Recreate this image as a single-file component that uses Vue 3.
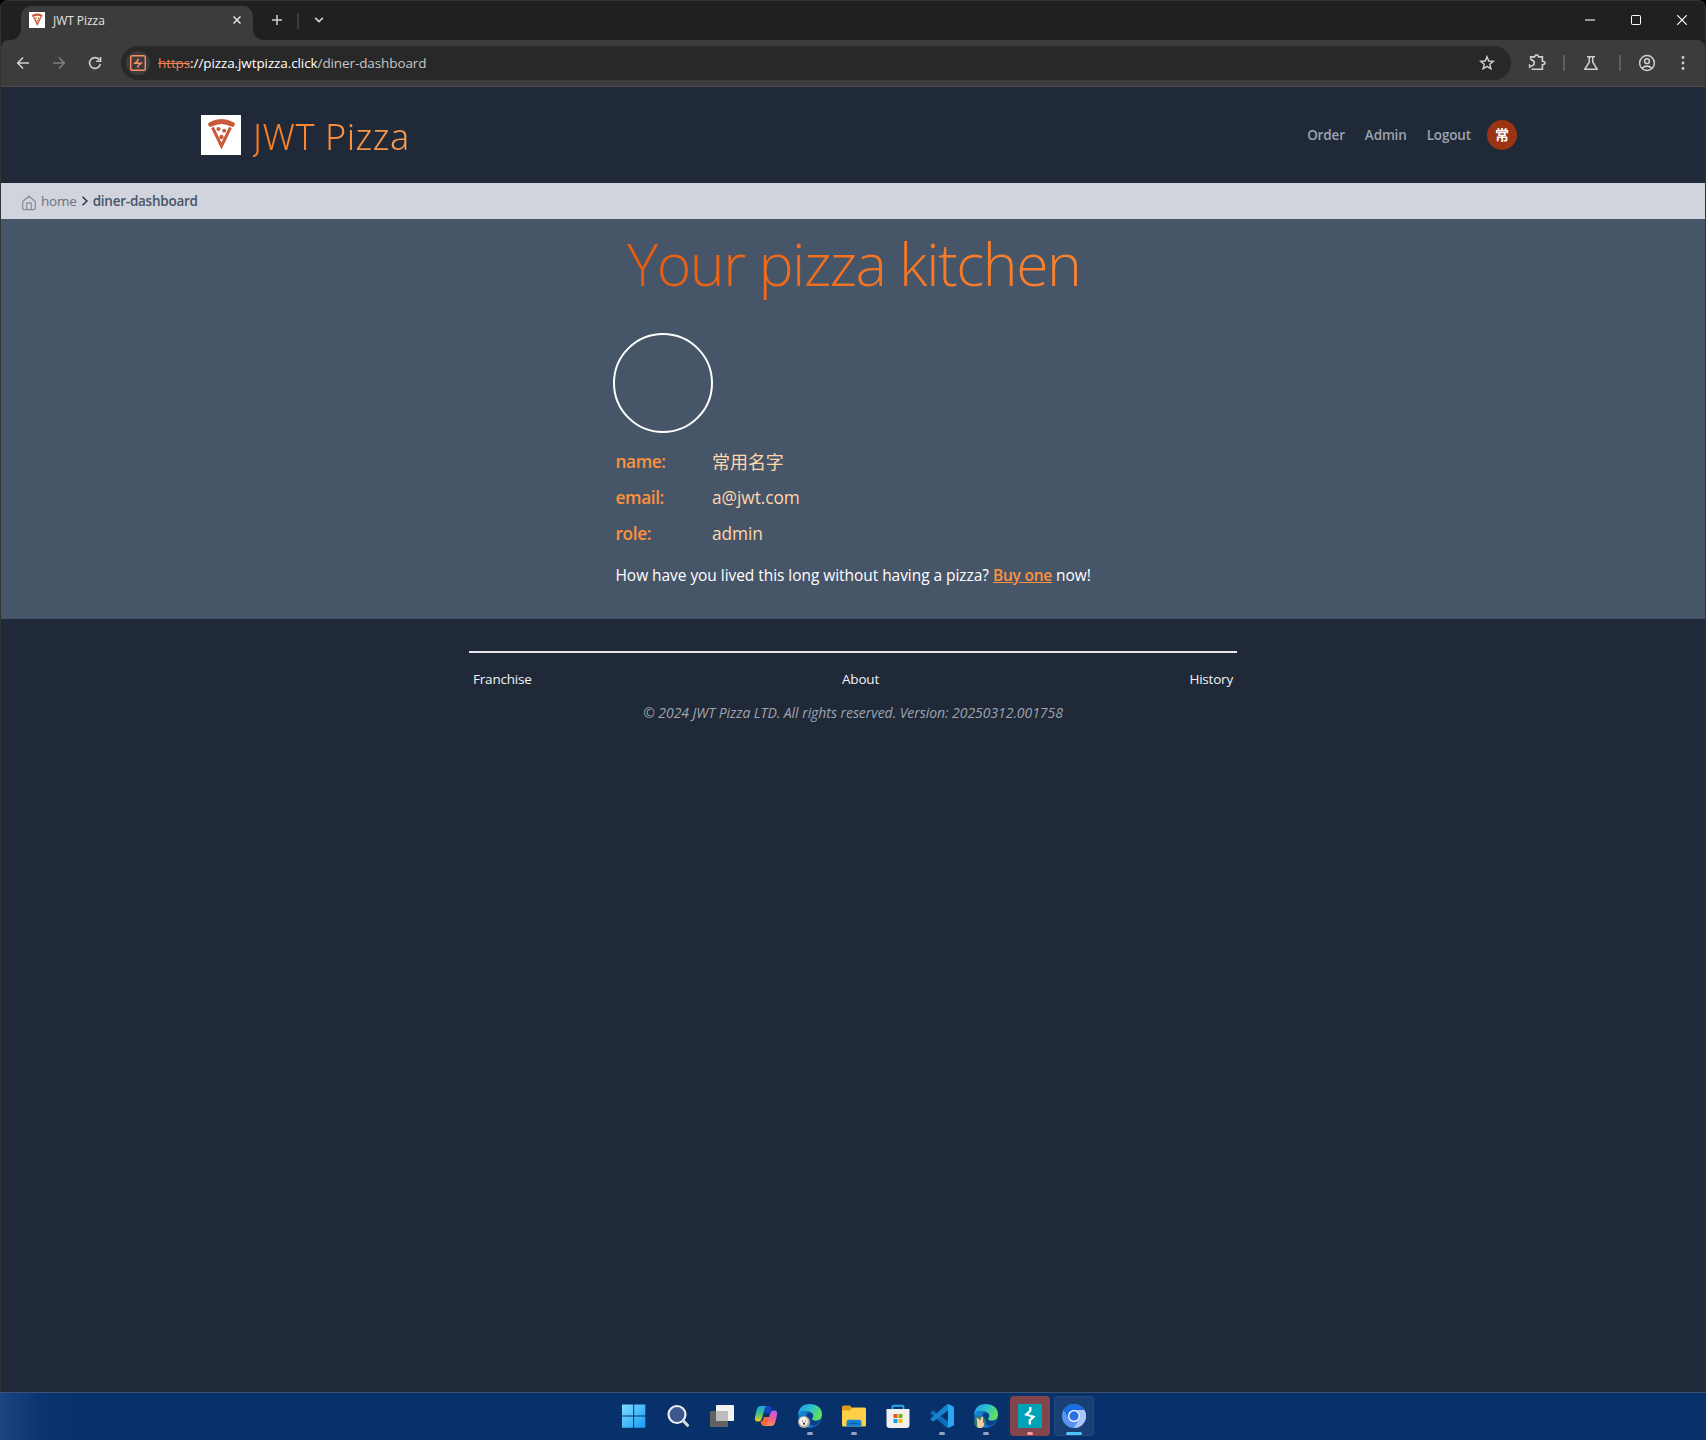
<script setup>
const navLinks = ['Order', 'Admin', 'Logout']
const details = [
  { label: 'name:', value: '常用名字' },
  { label: 'email:', value: 'a@jwt.com' },
  { label: 'role:', value: 'admin' },
]
const footerLinks = ['Franchise', 'About', 'History']
</script>

<template>
  <div class="screen">
    <div class="window">
      <div class="tabstrip">
        <div class="tab">
          <svg class="favicon" width="16" height="16" viewBox="0 0 40 40">
            <rect width="40" height="40" fill="#fff" />
            <path d="M10 9.5Q20.5 4 31 9.5" fill="none" stroke="#c75b39" stroke-width="5.5" stroke-linecap="round" />
            <path d="M12 13L20.5 31L29.500 13" fill="none" stroke="#c75b39" stroke-width="3.500" />
            <circle cx="17.5" cy="15" r="2" fill="#c75b39" /><circle cx="23.500" cy="16" r="2" fill="#c75b39" /><circle cx="20.500" cy="22" r="2" fill="#c75b39" />
          </svg>
          <span class="tab-title">JWT Pizza</span>
          <svg class="tab-close" width="8" height="8" viewBox="0 0 8 8"><path d="M.5.5l7 7M7.500.5l-7 7" stroke="#e3e3e3" stroke-width="1.500" /></svg>
        </div>
        <svg class="plus" width="10" height="10" viewBox="0 0 10 10"><path d="M5 0v10M0 5h10" stroke="#d0d0d0" stroke-width="1.500" /></svg>
        <span class="strip-sep"></span>
        <svg class="chev" width="10" height="6" viewBox="0 0 10 6"><path d="M1.200.8L5 4.600L8.800.8" fill="none" stroke="#d0d0d0" stroke-width="1.700" /></svg>
        <div class="controls">
          <svg width="10" height="10" viewBox="0 0 10 10"><path d="M0 5h10" stroke="#969696" stroke-width="2" /></svg>
          <svg width="10" height="10" viewBox="0 0 10 10"><rect x=".5" y=".5" width="9" height="9" rx=".8" fill="none" stroke="#fff" /></svg>
          <svg width="10" height="10" viewBox="0 0 10 10"><path d="M.2.2l9.600 9.600M9.800.2L.2 9.800" stroke="#fff" stroke-width="1.200" /></svg>
        </div>
      </div>

      <div class="toolbar">
        <svg class="nav-icon" width="16" height="16" viewBox="0 0 16 16"><path d="M14 8H3M8 2.500L2.700 8L8 13.500" fill="none" stroke="#d0d0d0" stroke-width="1.600" /></svg>
        <svg class="nav-icon" width="16" height="16" viewBox="0 0 16 16"><path d="M2 8h11M8 2.500L13.300 8L8 13.500" fill="none" stroke="#7d7d7d" stroke-width="1.600" /></svg>
        <svg class="nav-icon" width="16" height="16" viewBox="0 0 16 16"><path d="M13.300 8.800A5.400 5.400 0 1 1 12.400 4.900M13.500 2v4.300H9.200" fill="none" stroke="#d0d0d0" stroke-width="1.600" /></svg>
        <div class="omnibox">
          <span class="site-chip">
            <svg width="16" height="16" viewBox="0 0 16 16"><rect x=".7" y=".7" width="14.600" height="14.600" rx="1.500" fill="none" stroke="#ff8e66" stroke-width="1.400" /><path d="M8 3.500V5.500L4.800 8.300H11.200L8 10.800V12.700" fill="none" stroke="#ff8e66" stroke-width="1.400" /></svg>
          </span>
          <span class="url"><s>https</s><b>://pizza.jwtpizza.click</b>/diner-dashboard</span>
          <svg class="star" width="16" height="16" viewBox="0 0 16 16"><path d="M8 1.700L9.700 6l4.600.3-3.500 3 1.100 4.500L8 11.300l-3.900 2.500 1.100-4.500-3.500-3L6.300 6z" fill="none" stroke="#d0d0d0" stroke-width="1.400" /></svg>
        </div>
        <div class="tools">
          <svg width="18" height="18" viewBox="0 0 18 18"><path d="M2.700 5.600V2.900H6.600Q7 .9 8.600.9T10.600 2.900H14.400V7.200Q16.900 7.400 16.900 9T14.400 10.800V15.200H3.600M2.700 5.600Q6.300 6.200 6.300 9T2.300 12.300M1 10.500L2.200 12.300L1.300 14" fill="none" stroke="#d0d0d0" stroke-width="1.600" /></svg>
          <i></i>
          <svg width="16" height="16" viewBox="0 0 16 16"><path d="M4 1.700h8M6.300 2v5L1.700 14.300H14.300L9.700 7V2" fill="none" stroke="#d0d0d0" stroke-width="1.500" stroke-linejoin="round" /></svg>
          <i></i>
          <svg width="18" height="18" viewBox="0 0 18 18"><g fill="none" stroke="#d0d0d0" stroke-width="1.500"><circle cx="9" cy="9" r="7.400" /><circle cx="9" cy="7.200" r="2.400" /><path d="M4 14.200Q9 10 14 14.200" /></g></svg>
          <svg width="4" height="16" viewBox="0 0 4 16" fill="#d0d0d0"><circle cx="2" cy="2.500" r="1.400" /><circle cx="2" cy="8" r="1.400" /><circle cx="2" cy="13.500" r="1.400" /></svg>
        </div>
      </div>

      <header class="header">
        <svg width="40" height="40" viewBox="0 0 40 40">
          <rect width="40" height="40" fill="#fff" />
          <path d="M9.700 9.400Q20.500 3.500 31.300 9.400" fill="none" stroke="#c75b39" stroke-width="5" stroke-linecap="round" />
          <path d="M11.500 12.500L20.500 31L29.500 12.500" fill="none" stroke="#c75b39" stroke-width="3" />
          <circle cx="17.500" cy="14" r="2" fill="#c75b39" /><circle cx="23.200" cy="15.700" r="2" fill="#c75b39" /><circle cx="20.500" cy="22" r="2.200" fill="#c75b39" />
        </svg>
        <span class="brand">JWT Pizza</span>
        <nav class="nav">
          <a v-for="link in navLinks" :key="link">{{ link }}</a>
          <span class="avatar">常</span>
        </nav>
      </header>

      <div class="crumbs">
        <svg width="16" height="16" viewBox="0 0 16 16"><path d="M1.700 6.500L8 1.200L14.300 6.500V13Q14.300 14.700 12.600 14.700H3.400Q1.700 14.700 1.700 13ZM5.700 14.500V8.300Q5.700 7.800 6.200 7.800H9.800Q10.300 7.800 10.300 8.300V14.500" fill="none" stroke="#868c99" stroke-width="1.200" stroke-linejoin="round" /></svg>
        <span class="home">home</span>
        <svg class="sep" width="8" height="10" viewBox="0 0 8 10"><path d="M1.500.8L6 5L1.500 9.200" fill="none" stroke="#1f2937" stroke-width="1.300" /></svg>
        <span class="here">diner-dashboard</span>
      </div>

      <main class="main">
        <h2 class="title">Your pizza kitchen</h2>
        <section class="profile">
          <div class="photo"></div>
          <div v-for="row in details" :key="row.label" class="row">
            <span class="label">{{ row.label }}</span>
            <span class="value">{{ row.value }}</span>
          </div>
          <p class="pitch">How have you lived this long without having a pizza? <a>Buy one</a> now!</p>
        </section>
      </main>

      <footer class="footer">
        <div class="footer-links">
          <a v-for="link in footerLinks" :key="link">{{ link }}</a>
        </div>
        <p class="legal">© 2024 JWT Pizza LTD. All rights reserved. Version: 20250312.001758</p>
      </footer>
    </div>

    <div class="taskbar">
      <div class="slot">
        <svg width="24" height="24" viewBox="0 0 24 24">
          <defs><linearGradient id="win" x1="0" y1="0" x2="1" y2="1" gradientUnits="objectBoundingBox"><stop stop-color="#7fdcff" /><stop offset="1" stop-color="#159cf5" /></linearGradient></defs>
          <path d="M0 .5h11.200v11H0zM12.200.5H23.300v11H12.200zM0 12.500h11.200v11.200H0zM12.200 12.500H23.300v11.200H12.200z" fill="url(#win)" />
        </svg>
      </div>
      <div class="slot">
        <svg width="24" height="24" viewBox="0 0 24 24"><circle cx="11" cy="10.500" r="8.500" fill="#3d588f" stroke="#eceef2" stroke-width="2.200" /><path d="M17.500 17L21.500 21.300" stroke="#d9dbe0" stroke-width="3" stroke-linecap="round" /></svg>
      </div>
      <div class="slot">
        <svg width="24" height="24" viewBox="0 0 24 24">
          <rect x="0" y="7" width="18" height="16" rx="1" fill="#626262" /><rect x="6" y="1" width="18" height="16" rx="1" fill="#f2f2f2" /><path d="M6 7h12v10H6z" fill="#bdbdbd" />
        </svg>
      </div>
      <div class="slot">
        <svg width="24" height="24" viewBox="0 0 24 24">
          <defs>
            <linearGradient id="cpa" x1="0" y1="0" x2="0" y2="1"><stop stop-color="#1ba0e8" /><stop offset=".5" stop-color="#3fc47c" /><stop offset="1" stop-color="#f7c915" /></linearGradient>
            <linearGradient id="cpb" x1="0" y1="0" x2="0" y2="1"><stop stop-color="#b261ee" /><stop offset=".55" stop-color="#ee5c95" /><stop offset="1" stop-color="#fb9353" /></linearGradient>
          </defs>
          <path d="M6 2H13Q11 3 10 7L8 14Q7 17.500 4.500 17.500H3Q0 17 1.200 12L3 5Q4 2 6 2Z" fill="url(#cpa)" />
          <path d="M7 17.500Q9 17 10 13H16L14 20Q13.500 22 11 22H9Q7 21 6.500 17.500Z" fill="#f6653c" />
          <path d="M18 22H11Q13 21 14 17L16 10Q17 6.500 19.500 6.500H21Q24 7 22.800 12L21 19Q20 22 18 22Z" fill="url(#cpb)" />
          <path d="M10.500 7Q11.500 2 14 2H15.500Q18 2.500 18.300 6.500Q16.500 7 15.500 9.500H10Z" fill="#1740c0" />
        </svg>
      </div>
      <div class="slot running">
        <svg width="24" height="24" viewBox="0 0 24 24">
          <defs>
            <linearGradient id="edge" x1="0" y1=".2" x2="1" y2=".6"><stop stop-color="#219ee8" /><stop offset=".5" stop-color="#2cc4c4" /><stop offset="1" stop-color="#67e456" /></linearGradient>
          </defs>
          <circle cx="12" cy="12" r="12" fill="#0c59a8" />
          <path d="M0 11Q1 0 12 0Q24 1 24 11Q23.500 16 18 16.500Q13.500 16.500 14 14.500Q16 13 15 10.500Q13 7 8.500 7Q3 7 0 11Z" fill="url(#edge)" />
          <path d="M1 9Q5 5.500 10 7.200Q7 10 7.500 15Q9 22 16 22.500Q10 25 5 21.500Q0 17 1 9Z" fill="#157fd0" />
          <path d="M9 14Q9 10 12 9Q15 8.500 15.200 11.500Q13 14 14.500 16Q17 18 22 16.500Q20 21 15 21Q10 20 9 14Z" fill="#0b3f86" />
          <circle cx="6" cy="18" r="6" fill="#b9aca3" /><ellipse cx="5.500" cy="17.500" rx="4.300" ry="4.600" fill="#f4efe9" />
          <circle cx="4.500" cy="17" r=".6" fill="#333" /><circle cx="7.500" cy="17" r=".6" fill="#333" /><circle cx="6" cy="19.700" r="1.100" fill="#333" />
        </svg>
      </div>
      <div class="slot running">
        <svg width="24" height="24" viewBox="0 0 24 24">
          <path d="M0 3Q0 1.500 1.500 1.500H8L11 4.500V8H0Z" fill="#df9c12" />
          <path d="M0 6.500H8L10.500 3.500H22.500Q24 3.500 24 5V21Q24 22.500 22.500 22.500H1.500Q0 22.500 0 21Z" fill="#ffcf4a" />
          <path d="M4.500 22.500V18Q4.500 15.800 6.700 15.800H17.300Q19.500 15.800 19.500 18V22.500Z" fill="#1383d4" /><path d="M8 19.500h8" stroke="#0b5da0" stroke-width="1.500" stroke-linecap="round" />
        </svg>
      </div>
      <div class="slot">
        <svg width="24" height="24" viewBox="0 0 24 24">
          <path d="M6.500 6V2.700Q6.500 1.700 7.500 1.700H16.500Q17.500 1.700 17.500 2.700V6" fill="none" stroke="#2ba9ec" stroke-width="1.900" />
          <path d="M.5 5H23.500V21Q23.500 24 20.500 24H3.500Q.5 24 .5 21Z" fill="#f0f0f0" />
          <path d="M7.500 10h4v4h-4z" fill="#f25022" /><path d="M12.500 10h4v4h-4z" fill="#6fb800" /><path d="M7.500 15h4v4h-4z" fill="#00a4ef" /><path d="M12.500 15h4v4h-4z" fill="#ffb900" />
        </svg>
      </div>
      <div class="slot running">
        <svg width="24" height="24" viewBox="0 0 24 24">
          <path d="M.5 8.500L2.500 6.700Q3.200 6.300 4 6.900L18 17.500V24Q17 24 16 23L.5 9.500Q0 9 .5 8.500Z" fill="#0a6fbe" />
          <path d="M.5 15.500L2.500 17.300Q3.200 17.700 4 17.100L18 6.500V0Q17 0 16 1L.5 14.500Q0 15 .5 15.500Z" fill="#1583cf" />
          <path d="M18 0L23 2.200Q24 2.700 24 3.800V20.200Q24 21.300 23 21.800L18 24Z" fill="#2ba7f2" />
        </svg>
      </div>
      <div class="slot running">
        <svg width="24" height="24" viewBox="0 0 24 24">
          <circle cx="12" cy="12" r="12" fill="#0c59a8" />
          <path d="M0 11Q1 0 12 0Q24 1 24 11Q23.500 16 18 16.500Q13.500 16.500 14 14.500Q16 13 15 10.500Q13 7 8.500 7Q3 7 0 11Z" fill="url(#edge)" />
          <path d="M1 9Q5 5.500 10 7.200Q7 10 7.500 15Q9 22 16 22.500Q10 25 5 21.500Q0 17 1 9Z" fill="#157fd0" />
          <path d="M9 14Q9 10 12 9Q15 8.500 15.200 11.500Q13 14 14.500 16Q17 18 22 16.500Q20 21 15 21Q10 20 9 14Z" fill="#0b3f86" />
          <circle cx="6" cy="18" r="6" fill="#2c7a63" /><path d="M3.200 23.300L3 17L2.500 13.500L4.500 14.500L6 16.500L7.500 12.500L9.200 13L9 18L10.500 20L9 23.200Q6 24.800 3.200 23.300Z" fill="#efc9a8" />
        </svg>
      </div>
      <div class="slot running alert">
        <svg width="24" height="24" viewBox="0 0 24 24"><path d="M0 0h24v24H0z" fill="#00a2b8" /><path d="M12.300 3V6.800L8.300 10.500L15.500 12.700L11.800 16.500V20.500" fill="none" stroke="#fff" stroke-width="2.300" /></svg>
      </div>
      <div class="slot running active">
        <svg width="24" height="24" viewBox="0 0 24 24">
          <circle cx="12" cy="12" r="12" fill="#5b93f2" />
          <path d="M1.600 6A12 12 0 0 1 22.400 6H12A6 6 0 0 0 6.600 14.500Z" fill="#1a6de0" />
          <path d="M22.400 6A12 12 0 0 1 12 24L17.300 15A6 6 0 0 0 12 6Z" fill="#a9c7fa" />
          <circle cx="12" cy="12" r="6" fill="#fff" /><circle cx="12" cy="12" r="4.700" fill="#2a72e4" />
        </svg>
      </div>
    </div>
  </div>
</template>

<style>
body { background: #000; }
</style>

<style scoped>
.screen {
  width: 1706px;
  height: 1440px;
  display: flex;
  flex-direction: column;
  overflow: hidden;
  font-family: "Open Sans", "Noto Sans CJK SC", sans-serif;
}
.screen svg { display: block; flex: none; }
.window {
  box-sizing: border-box;
  height: 1392px;
  border: 1px solid #323333;
  border-bottom: 0;
  border-radius: 8px 8px 0 0;
  background: #202938;
  overflow: hidden;
}

/* Browser chrome */
.tabstrip {
  height: 39px;
  display: flex;
  align-items: center;
  background: #1f2120;
}
.tab {
  position: relative;
  align-self: flex-end;
  box-sizing: border-box;
  width: 232px;
  height: 34px;
  margin-left: 20px;
  padding: 0 12px 6px 8px;
  display: flex;
  align-items: center;
  border-radius: 10px 10px 0 0;
  background: #3c3c3c;
}
.tab::before,
.tab::after {
  content: "";
  position: absolute;
  bottom: 0;
  width: 10px;
  height: 10px;
}
.tab::before { left: -10px; background: radial-gradient(circle at 0 0, transparent 9.5px, #3c3c3c 10px); }
.tab::after { right: -10px; background: radial-gradient(circle at 100% 0, transparent 9.5px, #3c3c3c 10px); }
.tab-title { margin: 2px auto 0 8px; font-size: 12px; line-height: 16px; letter-spacing: -0.05px; color: #e3e3e3; }
.plus { margin: 0 0 1px 19px; }
.strip-sep { width: 2px; height: 16px; margin: 0 15px 0 15px; background: #3c3c3c; }
.chev { margin-bottom: 1px; }
.controls { display: flex; gap: 36px; margin: 0 18px 1px auto; }
.toolbar {
  box-sizing: border-box;
  height: 47px;
  display: flex;
  align-items: center;
  border-bottom: 1px solid #4a4a4a;
  border-radius: 8px 8px 0 0;
  background: #3c3c3c;
  box-shadow: 0 -8px 0 #1f2120;
  padding-left: 14px;
}
.nav-icon { margin-right: 20px; }
.omnibox {
  box-sizing: border-box;
  width: 1390px;
  height: 34px;
  margin-left: -2px;
  padding: 0 16px 0 5px;
  display: flex;
  align-items: center;
  border-radius: 17px;
  background: #282828;
}
.site-chip {
  width: 24px;
  height: 24px;
  display: flex;
  align-items: center;
  justify-content: center;
  border-radius: 50%;
  background: #3c3c3c;
}
.url { margin: 0 auto 0 8px; font-size: 13.5px; letter-spacing: -0.1px; color: #c7c7c7; }
.url b { font-weight: 400; color: #fff; }
.url s { color: #f08058; }
.tools { flex: 1; display: flex; align-items: center; padding-left: 17px; }
.tools i { width: 2px; height: 16px; background: #5e5e5e; margin: 0 18px 0 17px; }
.tools i + svg + i { margin: 0 17px 0 20px; }
.tools svg:last-child { margin-left: 25px; }

/* Site */
.header {
  height: 96px;
  display: flex;
  align-items: center;
  padding: 0 188px 0 200px;
}
.brand {
  margin: 3px auto 0 12px;
  font-family: "Noto Sans", sans-serif;
  font-size: 36px;
  line-height: 48px;
  font-weight: 300;
  letter-spacing: 0.5px;
  color: transparent;
  background: linear-gradient(70deg, #f97a1c, #fca057);
  background-clip: text;
  -webkit-background-clip: text;
}
.nav { display: flex; align-items: center; }
.nav a { margin-right: 20px; font-size: 13.5px; font-weight: 600; letter-spacing: -0.15px; color: #9ca3af; }
.avatar {
  width: 30px;
  height: 30px;
  margin-left: -4px;
  border-radius: 50%;
  background: #9a3412;
  color: #fff;
  font-size: 14px;
  font-weight: 700;
  line-height: 30px;
  text-align: center;
}
.crumbs {
  height: 36px;
  display: flex;
  align-items: center;
  padding-left: 20px;
  background: #d1d4dc;
  font-size: 13.5px;
}
.crumbs svg:first-child { margin-top: 4px; }
.home { margin-left: 4px; letter-spacing: -0.2px; color: #6b7280; }
.sep { margin: 0 4px 0 4px; }
.here { font-weight: 600; letter-spacing: -0.25px; color: #475569; }
.main { height: 400px; background: #475569; display: flex; flex-direction: column; align-items: center; }
.title {
  margin: 4px 0 0;
  padding-left: 4px;
  width: 456px;
  height: 80px;
  white-space: nowrap;
  font-size: 59px;
  line-height: 80px;
  font-weight: 300;
  letter-spacing: -1.48px;
  color: transparent;
  background: linear-gradient(75deg, #e8590c, #f37320 50%, #fa8432);
  background-clip: text;
  -webkit-background-clip: text;
}
.profile { width: 480px; }
.photo {
  box-sizing: border-box;
  width: 100px;
  height: 100px;
  margin: 30px 0 11px 0;
  border: 2px solid #fff;
  border-radius: 50%;
}
.row { height: 36px; display: flex; padding-left: 2.500px; font-size: 17.3px; line-height: 36px; }
.label { width: 96.5px; font-weight: 600; letter-spacing: -0.4px; color: #fb923c; }
.value { letter-spacing: -0.05px; color: #fed7aa; }
.row:nth-child(2) .value { font-size: 18px; }
.pitch { margin: 11px 0 0 2.500px; font-size: 15.5px; line-height: 24px; letter-spacing: -0.055px; white-space: nowrap; color: #fff; }
.pitch a { font-weight: 600; letter-spacing: -0.2px; color: #fb923c; text-decoration: underline; }
.footer { width: 768px; margin: 32px auto 0; }
.footer-links {
  display: flex;
  justify-content: space-between;
  padding: 14px 4px 0;
  border-top: 2px solid #e5e7eb;
  font-size: 13.5px;
  line-height: 24px;
  letter-spacing: -0.2px;
  color: #f3f4f6;
}
.legal { margin: 10px 0 0; text-align: center; font-size: 14px; line-height: 24px; font-style: italic; letter-spacing: -0.05px; color: #9ca3af; }

/* Desktop taskbar */
.taskbar {
  box-sizing: border-box;
  height: 48px;
  display: flex;
  padding: 3px 0 3px 614px;
  gap: 4px;
  border-top: 1px solid #3b5273;
  background: linear-gradient(90deg, #1b4480, #0c3470 40px, #08306b 80px);
}
.slot {
  position: relative;
  width: 40px;
  height: 40px;
  display: flex;
  align-items: center;
  justify-content: center;
  border-radius: 4px;
}
.running::after {
  content: "";
  position: absolute;
  bottom: 1px;
  left: 17px;
  width: 6px;
  height: 3px;
  border-radius: 2px;
  background: #93a3bd;
}
.alert { background: #82454c; }
.alert::after { background: #ff99a4; }
.active { background: #1a3f74; box-shadow: inset 0 0 0 1px #244a7e; }
.active::after { left: 12px; width: 16px; background: #4cc2ff; }
</style>
